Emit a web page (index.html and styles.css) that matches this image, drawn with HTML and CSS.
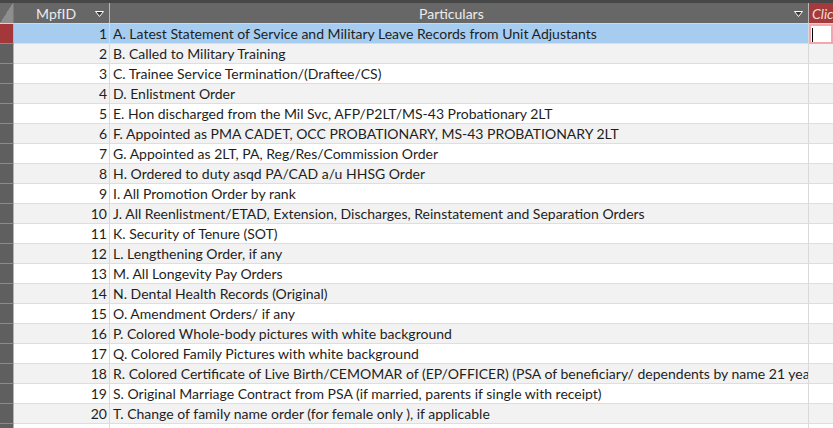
FILE: index.html
```html
<!DOCTYPE html>
<html>
<head>
<meta charset="utf-8">
<link rel="stylesheet" href="styles.css">
</head>
<body>
<div class="sheet">
  <div class="topstrip"></div>
  <div class="row head">
    <div class="sel corner"></div>
    <div class="hcell h-id"><span class="htext">MpfID</span><svg class="arrow" width="9" height="6" viewBox="0 0 9 6"><polygon points="0.5,0.5 8.5,0.5 4.5,5.5" fill="#3a3a3a" stroke="#ffffff" stroke-width="1"/></svg></div>
    <div class="hcell h-part"><span class="htext">Particulars</span><svg class="arrow" width="9" height="6" viewBox="0 0 9 6"><polygon points="0.5,0.5 8.5,0.5 4.5,5.5" fill="#3a3a3a" stroke="#ffffff" stroke-width="1"/></svg></div>
    <div class="hcell h-click">Click to Add</div>
  </div>
  <div class="body">
    <div class="row selected"><div class="sel"></div><div class="cell num">1</div><div class="cell txt">A. Latest Statement of Service and Military Leave Records from Unit Adjustants</div><div class="cell add current"><span class="caret"></span></div></div>
    <div class="row"><div class="sel"></div><div class="cell num">2</div><div class="cell txt">B. Called to Military Training</div><div class="cell add"></div></div>
    <div class="row"><div class="sel"></div><div class="cell num">3</div><div class="cell txt">C. Trainee Service Termination/(Draftee/CS)</div><div class="cell add"></div></div>
    <div class="row"><div class="sel"></div><div class="cell num">4</div><div class="cell txt">D. Enlistment Order</div><div class="cell add"></div></div>
    <div class="row"><div class="sel"></div><div class="cell num">5</div><div class="cell txt">E. Hon discharged from the Mil Svc, AFP/P2LT/MS-43 Probationary 2LT</div><div class="cell add"></div></div>
    <div class="row"><div class="sel"></div><div class="cell num">6</div><div class="cell txt">F. Appointed as PMA CADET, OCC PROBATIONARY, MS-43 PROBATIONARY 2LT</div><div class="cell add"></div></div>
    <div class="row"><div class="sel"></div><div class="cell num">7</div><div class="cell txt">G. Appointed as 2LT, PA, Reg/Res/Commission Order</div><div class="cell add"></div></div>
    <div class="row"><div class="sel"></div><div class="cell num">8</div><div class="cell txt">H. Ordered to duty asqd PA/CAD a/u HHSG Order</div><div class="cell add"></div></div>
    <div class="row"><div class="sel"></div><div class="cell num">9</div><div class="cell txt">I. All Promotion Order by rank</div><div class="cell add"></div></div>
    <div class="row"><div class="sel"></div><div class="cell num">10</div><div class="cell txt">J. All Reenlistment/ETAD, Extension, Discharges, Reinstatement and Separation Orders</div><div class="cell add"></div></div>
    <div class="row"><div class="sel"></div><div class="cell num">11</div><div class="cell txt">K. Security of Tenure (SOT)</div><div class="cell add"></div></div>
    <div class="row"><div class="sel"></div><div class="cell num">12</div><div class="cell txt">L. Lengthening Order, if any</div><div class="cell add"></div></div>
    <div class="row"><div class="sel"></div><div class="cell num">13</div><div class="cell txt">M. All Longevity Pay Orders</div><div class="cell add"></div></div>
    <div class="row"><div class="sel"></div><div class="cell num">14</div><div class="cell txt">N. Dental Health Records (Original)</div><div class="cell add"></div></div>
    <div class="row"><div class="sel"></div><div class="cell num">15</div><div class="cell txt">O. Amendment Orders/ if any</div><div class="cell add"></div></div>
    <div class="row"><div class="sel"></div><div class="cell num">16</div><div class="cell txt">P. Colored Whole-body pictures with white background</div><div class="cell add"></div></div>
    <div class="row"><div class="sel"></div><div class="cell num">17</div><div class="cell txt">Q. Colored Family Pictures with white background</div><div class="cell add"></div></div>
    <div class="row"><div class="sel"></div><div class="cell num">18</div><div class="cell txt">R. Colored Certificate of Live Birth/CEMOMAR of (EP/OFFICER) (PSA of beneficiary/ dependents by name 21 years old and below)</div><div class="cell add"></div></div>
    <div class="row"><div class="sel"></div><div class="cell num">19</div><div class="cell txt">S. Original Marriage Contract from PSA (if married, parents if single with receipt)</div><div class="cell add"></div></div>
    <div class="row"><div class="sel"></div><div class="cell num">20</div><div class="cell txt">T. Change of family name order (for female only ), if applicable</div><div class="cell add"></div></div>
    <div class="row"><div class="sel"></div><div class="cell num"></div><div class="cell txt"></div><div class="cell add"></div></div>
  </div>
</div>
</body>
</html>
```
FILE: styles.css
```css
html, body {
  margin: 0;
  padding: 0;
  background: #ffffff;
  overflow: hidden;
}
.sheet {
  width: 833px;
  height: 428px;
  overflow: hidden;
  font-family: Lato, "Liberation Sans", sans-serif;
  font-size: 14px;
  color: #1e1e1e;
}
.topstrip {
  height: 3px;
  background: #474747;
}
.row {
  display: grid;
  grid-template-columns: 14px 96px 699px 1fr;
  height: 20px;
  box-sizing: border-box;
}
.head {
  height: 21px;
  background: #676767;
  border-bottom: 1px solid #d6d6d6;
}
.sel {
  background: #5f5f5f;
  border-right: 1px solid #b4b4b4;
  border-bottom: 1px solid #8a8a8a;
  box-sizing: border-box;
}
.corner {
  background: linear-gradient(to bottom right, #6a6a6a 50%, #8e8e8e 50%);
  border-bottom: none;
  border-right: 1px solid #7a7a7a;
}
.hcell {
  display: flex;
  align-items: center;
  color: #ececec;
  border-right: 1px solid #b8b8b8;
  box-sizing: border-box;
  position: relative;
  white-space: nowrap;
  overflow: hidden;
}
.h-id {
  padding-left: 22px;
}
.h-part {
  padding-left: 309px;
}
.arrow {
  position: absolute;
  right: 5px;
  top: 8px;
}
.h-click {
  background: #a43a3b;
  color: #f3dada;
  font-style: italic;
  border-right: none;
  padding-left: 3px;
}
.cell {
  border-right: 1px solid #d9d9d9;
  border-bottom: 1px solid #dedede;
  box-sizing: border-box;
  white-space: nowrap;
  overflow: hidden;
  line-height: 19px;
}
.num {
  text-align: right;
  padding-right: 2px;
}
.txt {
  padding-left: 3px;
}
.add {
  border-right: none;
}
.row:nth-child(even) .cell {
  background: #f2f2f2;
}
.selected .sel {
  background: #a4373a;
}
.selected .cell {
  background: #a6cdef;
}
.selected .current {
  background: #ffffff;
  border: 2px solid #f3a6ad;
  position: relative;
}
.caret {
  position: absolute;
  left: 1px;
  top: 2px;
  width: 1px;
  height: 14px;
  background: #000000;
}
```
